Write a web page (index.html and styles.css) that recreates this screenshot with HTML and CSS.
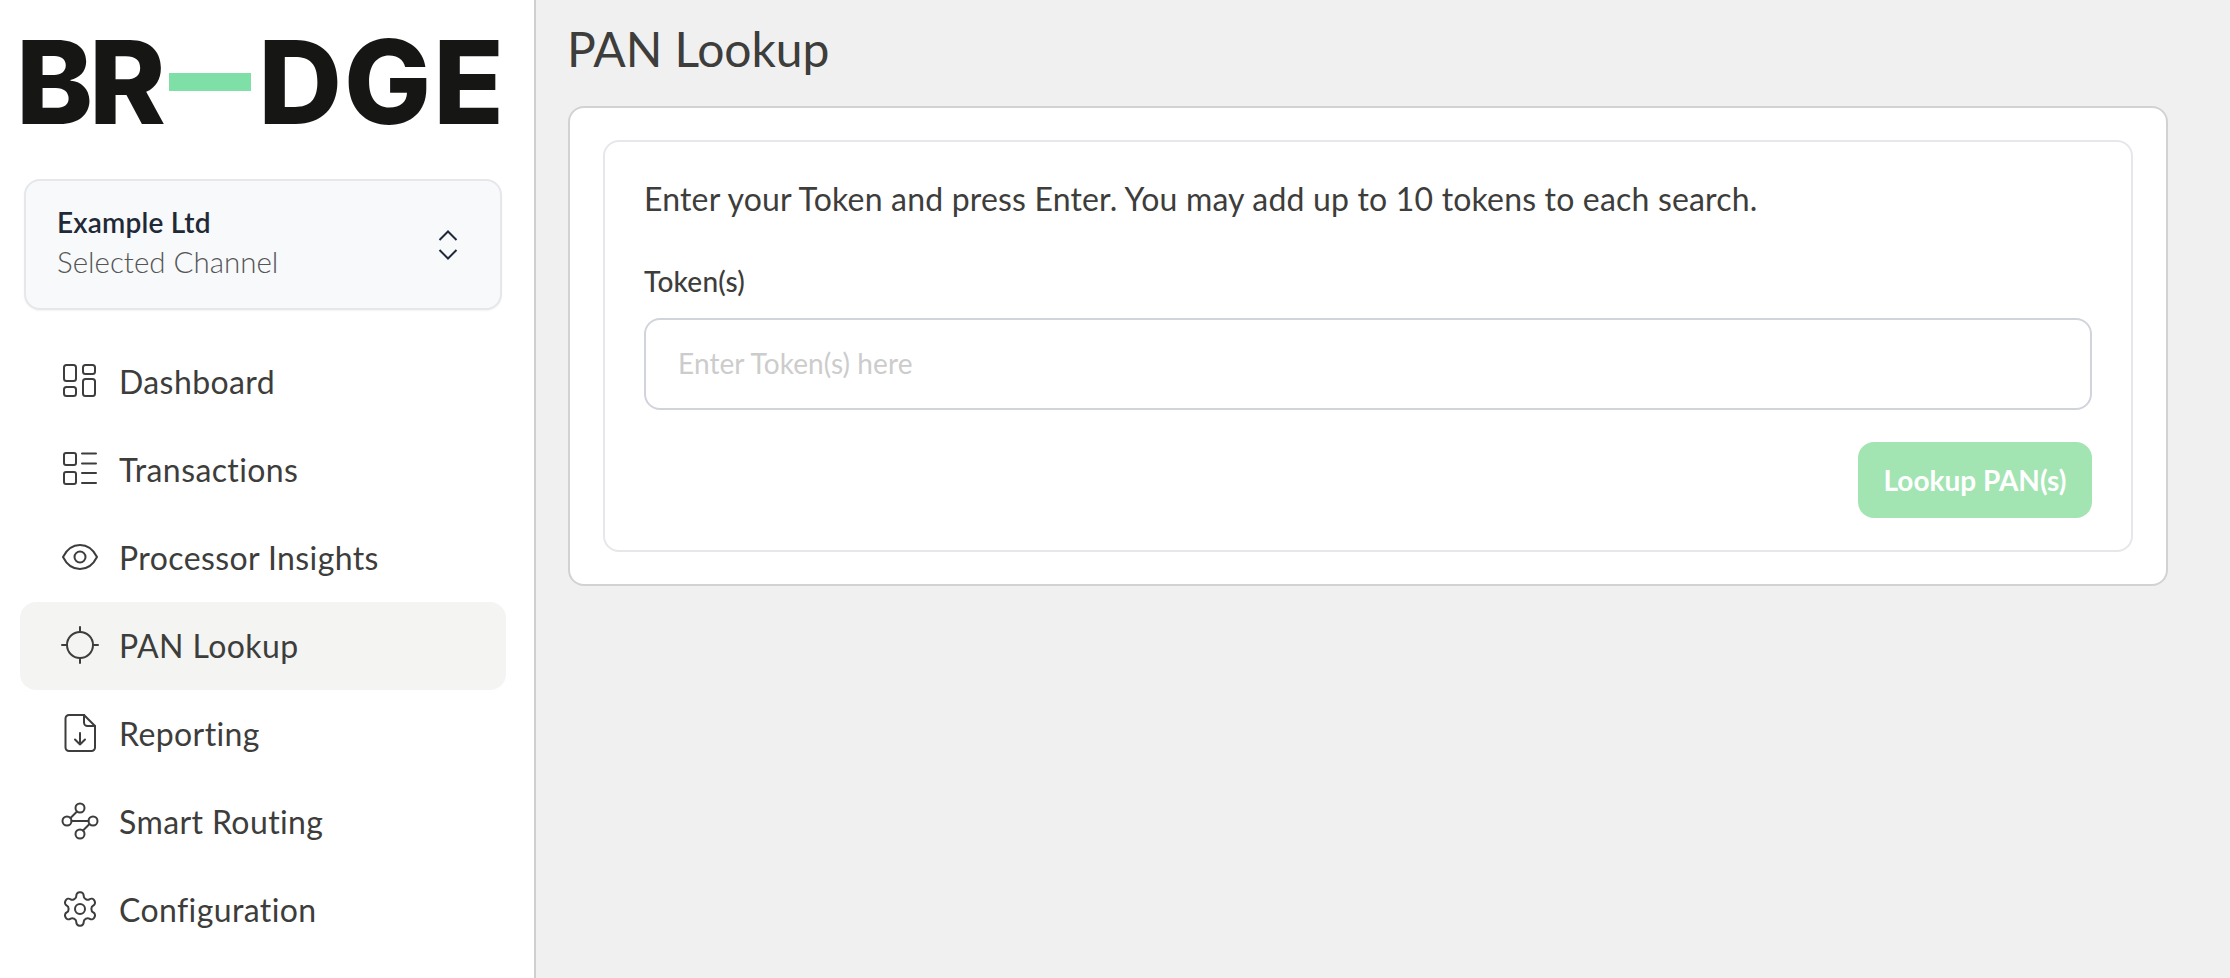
FILE: index.html
```html
<!DOCTYPE html>
<html lang="en">
<head>
    <meta charset="UTF-8">
    <meta name="viewport" content="width=device-width, initial-scale=1.0">
    <title>PAN Lookup</title>
    <link rel="stylesheet" href="styles.css">
</head>
<body>
    <div class="layout">
        <aside class="sidebar">
            <div class="logo">
                <span class="logo-start">BR</span>
                <span class="logo-bar"></span>
                <span class="logo-end">DGE</span>
            </div>
            <div class="channel">
                <div class="channel-text">
                    <div class="channel-name">Example Ltd</div>
                    <div class="channel-label">Selected Channel</div>
                </div>
                <svg class="channel-arrows" viewBox="0 0 20 30" width="20" height="30">
                    <path d="M1.5 10 10 1.5 18.500 10M1.500 20 10 28.500 18.500 20"/>
                </svg>
            </div>
            <nav class="nav">
                <a class="nav-item">
                    <svg class="nav-icon" viewBox="-2 -2 40 40">
                        <rect x="2" y="2" width="12" height="16" rx="2.500"/>
                        <rect x="21" y="2" width="12" height="9" rx="2.500"/>
                        <rect x="2" y="24" width="12" height="9" rx="2.500"/>
                        <rect x="21" y="16" width="12" height="17" rx="2.500"/>
                    </svg>
                    Dashboard
                </a>
                <a class="nav-item">
                    <svg class="nav-icon" viewBox="-2 -2 40 40">
                        <rect x="2" y="2" width="12" height="12" rx="2"/>
                        <rect x="2" y="21" width="12" height="12" rx="2"/>
                        <path d="M20 2.500H34M20 12.500H34M20 22H34M20 32H34"/>
                    </svg>
                    Transactions
                </a>
                <a class="nav-item">
                    <svg class="nav-icon" viewBox="-2 -2 40 40">
                        <path d="M1 18C5 10 11 6 18 6S31 10 35 18C31 26 25 30 18 30S5 26 1 18Z"/>
                        <circle cx="18" cy="18" r="5.500"/>
                    </svg>
                    Processor Insights
                </a>
                <a class="nav-item active">
                    <svg class="nav-icon" viewBox="-2 -2 40 40">
                        <circle cx="18" cy="18" r="13"/>
                        <path d="M18 0V5M18 31V36M0 18H5M31 18H36"/>
                    </svg>
                    PAN Lookup
                </a>
                <a class="nav-item">
                    <svg class="nav-icon" viewBox="-2 -2 40 40">
                        <path d="M7 0H22L33 11V32.500A3.500 3.500 0 0 1 29.500 36H7A3.500 3.500 0 0 1 3.500 32.500V3.500A3.500 3.500 0 0 1 7 0Z"/>
                        <path d="M22 0V7.500A3.500 3.500 0 0 0 25.500 11H33"/>
                        <path d="M18 18V29.500M13 24.500 18 29.500 23 24.500"/>
                    </svg>
                    Reporting
                </a>
                <a class="nav-item">
                    <svg class="nav-icon" viewBox="-2 -2 40 40">
                        <circle cx="18" cy="5" r="4.500"/>
                        <circle cx="5" cy="18" r="4.500"/>
                        <circle cx="31" cy="18" r="4.500"/>
                        <circle cx="18" cy="31" r="4.500"/>
                        <path d="M9.500 18H26.500M15 8.500 8.500 15M21 27.500 27.500 21"/>
                    </svg>
                    Smart Routing
                </a>
                <a class="nav-item">
                    <svg class="nav-icon gear" viewBox="0 0 24 24">
                        <path d="M12.220 2h-.44a2 2 0 0 0-2 2v.18a2 2 0 0 1-1 1.730l-.43.250a2 2 0 0 1-2 0l-.15-.08a2 2 0 0 0-2.730.730l-.22.380a2 2 0 0 0 .730 2.730l.15.100a2 2 0 0 1 1 1.720v.510a2 2 0 0 1-1 1.740l-.15.090a2 2 0 0 0-.730 2.730l.22.380a2 2 0 0 0 2.730.730l.15-.08a2 2 0 0 1 2 0l.43.250a2 2 0 0 1 1 1.730V20a2 2 0 0 0 2 2h.44a2 2 0 0 0 2-2v-.18a2 2 0 0 1 1-1.730l.43-.25a2 2 0 0 1 2 0l.15.08a2 2 0 0 0 2.730-.73l.22-.39a2 2 0 0 0-.73-2.730l-.15-.08a2 2 0 0 1-1-1.740v-.5a2 2 0 0 1 1-1.740l.15-.09a2 2 0 0 0 .73-2.730l-.22-.38a2 2 0 0 0-2.730-.73l-.15.08a2 2 0 0 1-2 0l-.43-.25a2 2 0 0 1-1-1.730V4a2 2 0 0 0-2-2z"/>
                        <circle cx="12" cy="12" r="3"/>
                    </svg>
                    Configuration
                </a>
            </nav>
        </aside>
        <main class="main">
            <h1 class="page-title">PAN Lookup</h1>
            <div class="outer-card">
                <div class="inner-card">
                    <p class="intro">Enter your Token and press Enter. You may add up to 10 tokens to each search.</p>
                    <label class="field-label" for="tokens">Token(s)</label>
                    <input class="field-input" id="tokens" type="text" placeholder="Enter Token(s) here">
                    <div class="actions">
                        <button class="lookup-button" disabled>Lookup PAN(s)</button>
                    </div>
                </div>
            </div>
        </main>
    </div>
</body>
</html>
```

FILE: styles.css
```css
* {
    box-sizing: border-box;
}
body {
    margin: 0;
    background-color: #f0f0f0;
    font-family: Lato, "Noto Sans", sans-serif;
    color: #3d3d3b;
}
.layout {
    display: flex;
    height: 978px;
    overflow: hidden;
}
.sidebar {
    width: 536px;
    flex-shrink: 0;
    background-color: #fff;
    border-right: 2px solid #cfcfcf;
    padding: 40px 28px 0 20px;
}
.logo {
    display: flex;
    align-items: center;
    height: 84px;
    margin: 0 0 55px -4px;
    font-family: Inter, sans-serif;
    font-weight: 800;
    font-size: 116px;
    color: #161615;
}
.logo-start {
    letter-spacing: -4px;
}
.logo-end {
    letter-spacing: 2px;
}
.logo-bar {
    width: 84px;
    height: 18px;
    margin: 0 7px 0 7px;
    background-color: #7fe0a7;
}
.channel {
    display: flex;
    align-items: center;
    justify-content: space-between;
    height: 131px;
    margin: 0 4px;
    padding: 0 42px 0 31px;
    background-color: #f8f9fb;
    border: 2px solid #e5e7eb;
    border-radius: 16px;
    box-shadow: 0 1px 2px rgba(0, 0, 0, 0.05);
}
.channel-text {
    padding-bottom: 5px;
}
.channel-name {
    font-size: 28px;
    line-height: 34px;
    font-weight: 600;
    letter-spacing: 0.2px;
    color: #1f2937;
    margin-bottom: 6px;
}
.channel-label {
    font-size: 29.500px;
    line-height: 34px;
    font-weight: 300;
    color: #555;
}
.channel-arrows {
    fill: none;
    stroke: #1f2937;
    stroke-width: 2;
}
.nav {
    margin-top: 28px;
    width: 486px;
}
.nav-item {
    display: flex;
    align-items: center;
    gap: 19px;
    height: 88px;
    padding: 0 0 2px 40px;
    font-size: 32px;
    letter-spacing: 0.4px;
    border-radius: 16px;
}
.nav-item.active {
    background-color: #f4f4f3;
}
.nav-icon {
    width: 40px;
    height: 40px;
    flex-shrink: 0;
    fill: none;
    stroke: #3d3d3b;
    stroke-width: 2;
    stroke-linecap: round;
    stroke-linejoin: round;
}
.nav-icon.gear {
    stroke-width: 1.200;
}
.main {
    flex: 1;
    padding: 0 62px 0 32px;
}
.page-title {
    margin: 0 0 0 -1px;
    height: 106px;
    line-height: 98px;
    font-size: 48px;
    font-weight: 400;
    letter-spacing: -0.1px;
}
.outer-card {
    padding: 32px 33px;
    background-color: #fff;
    border: 2px solid #d4d2d0;
    border-radius: 16px;
}
.inner-card {
    height: 412px;
    padding: 36px 39px 0;
    border: 2px solid #e5e7eb;
    border-radius: 16px;
}
.intro {
    margin: 0 0 43px;
    font-size: 32px;
    line-height: 42px;
    letter-spacing: 0.18px;
}
.field-label {
    display: block;
    margin-bottom: 19px;
    font-size: 28px;
    line-height: 36px;
    font-weight: 500;
    letter-spacing: 0.2px;
}
.field-input {
    display: block;
    width: 100%;
    height: 92px;
    padding: 0 32px 2px;
    background-color: #fff;
    border: 2px solid #d1d5db;
    border-radius: 16px;
    font-family: inherit;
    font-size: 28px;
    letter-spacing: 0.1px;
}
.field-input::placeholder {
    color: #ccc;
}
.actions {
    display: flex;
    justify-content: flex-end;
    margin-top: 32px;
}
.lookup-button {
    width: 234px;
    height: 76px;
    border: none;
    border-radius: 16px;
    background-color: #a3e4b3;
    color: #fff;
    font-family: inherit;
    font-size: 28px;
    font-weight: 700;
}
```
